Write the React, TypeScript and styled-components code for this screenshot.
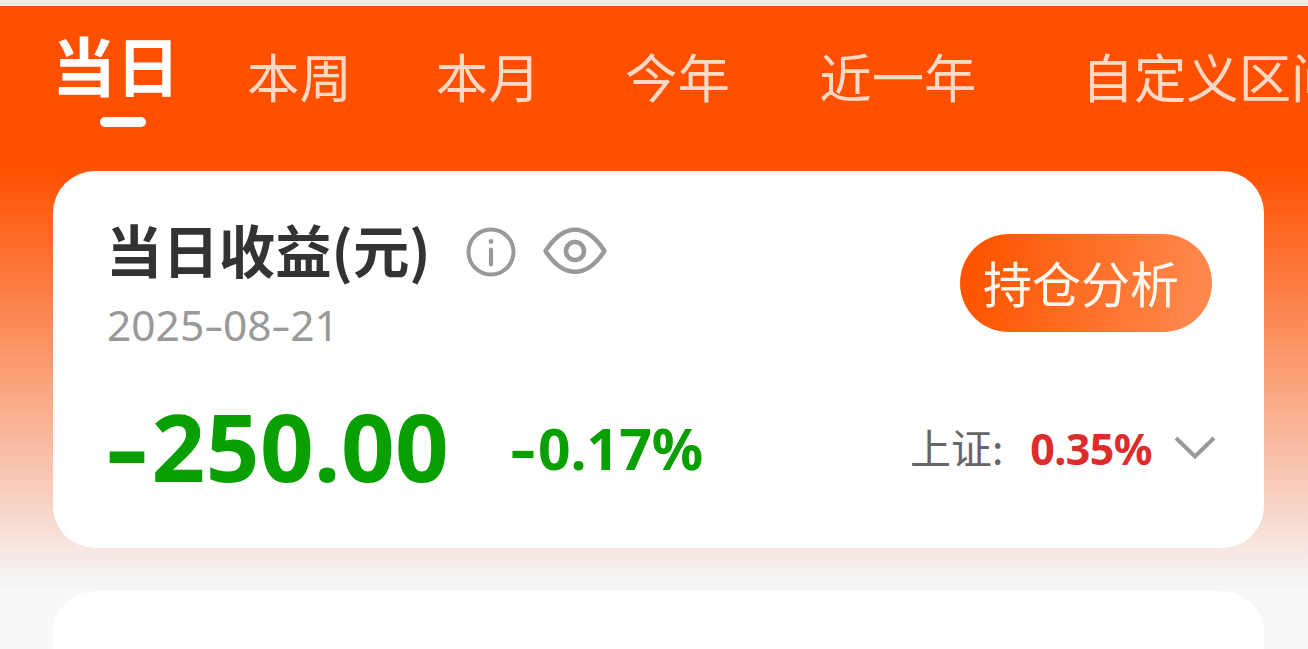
import styled, { createGlobalStyle } from 'styled-components'

const cjk = `'Noto Sans CJK SC', sans-serif`
const digits = `'Noto Sans', 'Open Sans', sans-serif`

const GlobalStyle = createGlobalStyle`
  * {
    box-sizing: border-box;
  }

  body {
    margin: 0;
    overflow: hidden;
    font-family: ${cjk};
  }
`

const Page = styled.div`
  height: 649px;
  overflow: hidden;
  border-top: 6px solid #f8e8e1;
  background: linear-gradient(
    to bottom,
    #ff5000 0,
    #ff5000 160px,
    #fe6b29 236px,
    #fb9262 334px,
    #f9b190 410px,
    #f8cfc0 490px,
    #f6e5df 540px,
    #f6f8fa 584px
  );
`

const Tabs = styled.nav`
  display: flex;
  align-items: flex-start;
  height: 165px;
  padding-left: 52px;
`

const Tab = styled.button<{ $active?: boolean; $gap?: number }>`
  position: relative;
  flex-shrink: 0;
  margin: ${({ $active }) => ($active ? '15px' : '31px')} 0 0 ${({ $gap = 0 }) => $gap}px;
  padding: 0;
  border: 0;
  background: none;
  font-family: inherit;
  font-size: ${({ $active }) => ($active ? 64 : 52.4)}px;
  font-weight: ${({ $active }) => ($active ? 700 : 400)};
  line-height: ${({ $active }) => ($active ? 84 : 76)}px;
  color: ${({ $active }) => ($active ? '#fff' : '#ffd9c5')};
  white-space: nowrap;
`

const Indicator = styled.span`
  position: absolute;
  left: 48px;
  bottom: -22px;
  width: 46px;
  height: 10px;
  border-radius: 5px;
  background: #fff;
`

const Card = styled.section`
  height: 377px;
  margin: 0 44px 43px 53px;
  padding: 44px 48px 0 54px;
  border-radius: 42px;
  background: #fff;
`

const CardTop = styled.div`
  display: flex;
  align-items: flex-start;
  justify-content: space-between;
`

const TitleRow = styled.div`
  display: flex;
  align-items: center;
  height: 74px;
`

const Title = styled.h1`
  margin: -6px 0 0 -1px;
  font-size: 56.4px;
  font-weight: 700;
  line-height: 74px;
  color: #333;
`

const InfoIcon = styled.svg`
  width: 50px;
  height: 50px;
  margin: -1px 0 0 35px;
`

const EyeIcon = styled.svg`
  width: 64px;
  height: 48px;
  margin: -3px 0 0 27px;
`

const DateText = styled.div`
  margin-top: 6px;
  font-family: ${digits};
  font-size: 42.5px;
  line-height: 60px;
  color: #999;
`

const DateDash = styled.span`
  display: inline-block;
  margin: 0 2.5px;
  transform: scaleX(1.45);
`

const AnalysisButton = styled.button`
  width: 252px;
  height: 98px;
  margin: 19px 4px 0 0;
  padding: 0 0 3px 23px;
  border: 0;
  border-radius: 49px;
  background: linear-gradient(100deg, #ff5500 8%, #ff884d 92%);
  font-family: inherit;
  font-size: 49px;
  line-height: 92px;
  text-align: left;
  color: #fff8f0;
`

const Figures = styled.div`
  display: flex;
  align-items: flex-start;
  margin-top: 26px;
  font-family: ${digits};
  font-weight: 700;
  line-height: 130px;
  white-space: nowrap;
`

const Amount = styled.span`
  font-size: 94px;
  letter-spacing: 0.4px;
  color: #0a9f00;
`

const Rate = styled.span`
  margin: 2px 0 0 62px;
  font-size: 57px;
  color: #0a9f00;
`

const Minus = styled.span`
  display: inline-block;
  margin: 0 0.1em 0 0.05em;
  transform: scaleX(1.4);
`

const IndexSwitch = styled.div`
  display: flex;
  align-items: baseline;
  margin: 1px 0 0 auto;
`

const IndexName = styled.span`
  font-family: ${cjk};
  font-size: 41px;
  font-weight: 400;
  color: #666;
  transform: translateY(-1px);
`

const IndexRate = styled.span`
  margin-left: 27px;
  font-size: 43px;
  letter-spacing: -0.6px;
  color: #dc2c2c;
`

const Chevron = styled.svg`
  width: 42px;
  height: 26px;
  margin-left: 22px;
  transform: translateY(-4px);
`

const NextCard = styled(Card)`
  margin-bottom: 0;
`

const tabs = [
  { label: '当日', gap: 0 },
  { label: '本周', gap: 67 },
  { label: '本月', gap: 84 },
  { label: '今年', gap: 84.5 },
  { label: '近一年', gap: 89.5 },
  { label: '自定义区间', gap: 105 },
]

export default function App() {
  return (
    <Page>
      <GlobalStyle />
      <Tabs>
        {tabs.map((tab, i) => (
          <Tab key={tab.label} $active={i === 0} $gap={tab.gap}>
            {tab.label}
            {i === 0 && <Indicator />}
          </Tab>
        ))}
      </Tabs>

      <Card>
        <CardTop>
          <div>
            <TitleRow>
              <Title>当日收益(元)</Title>
              <InfoIcon viewBox="0 0 50 50" fill="none" stroke="#999" strokeLinecap="round">
                <circle cx="25" cy="25" r="22.5" strokeWidth="4" />
                <path d="M25 22.5V37.5" strokeWidth="4.2" />
                <circle cx="25" cy="14.5" r="2.4" fill="#999" stroke="none" />
              </InfoIcon>
              <EyeIcon viewBox="0 0 64 48" fill="none" stroke="#999" strokeLinejoin="round">
                <path
                  d="M2.5 24C11 11 20 2.8 32 2.8S53 11 61.5 24C53 37 44 44.8 32 44.8S11 37 2.5 24Z"
                  strokeWidth="4.4"
                />
                <circle cx="32" cy="24" r="9" strokeWidth="4.6" />
              </EyeIcon>
            </TitleRow>
            <DateText>
              2025<DateDash>-</DateDash>08<DateDash>-</DateDash>21
            </DateText>
          </div>
          <AnalysisButton>持仓分析</AnalysisButton>
        </CardTop>

        <Figures>
          <Amount>
            <Minus>-</Minus>250.00
          </Amount>
          <Rate>
            <Minus>-</Minus>0.17%
          </Rate>
          <IndexSwitch>
            <IndexName>上证:</IndexName>
            <IndexRate>0.35%</IndexRate>
            <Chevron viewBox="0 0 42 26" fill="none" stroke="#999" strokeWidth="4">
              <path d="M2 3L21 21.5L40 3" />
            </Chevron>
          </IndexSwitch>
        </Figures>
      </Card>

      <NextCard />
    </Page>
  )
}
